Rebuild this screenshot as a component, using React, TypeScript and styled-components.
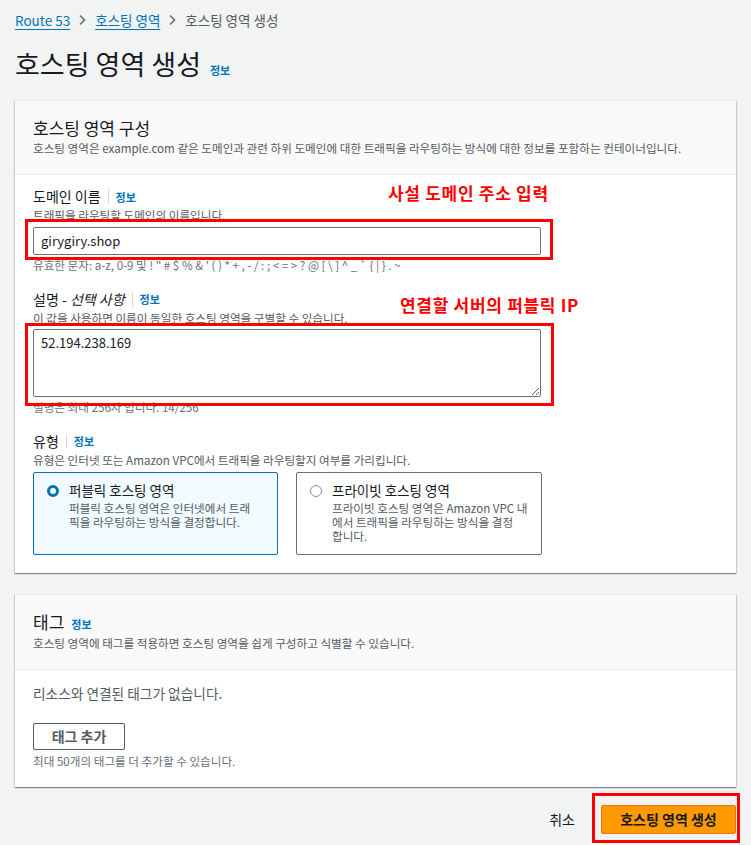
import React from "react";
import styled, { createGlobalStyle } from "styled-components";

const GlobalStyle = createGlobalStyle`
  html, body {
    margin: 0;
    padding: 0;
    background: #f2f3f3;
  }
  body {
    font-family: "Noto Sans CJK KR", "Noto Sans", sans-serif;
    color: #16191f;
  }
  * {
    box-sizing: border-box;
  }
`;

const publicDesc = "퍼블릭 호스팅 영역은 인터넷에서 트래\n픽을 라우팅하는 방식을 결정합니다.";
const privateDesc = "프라이빗 호스팅 영역은 Amazon VPC 내\n에서 트래픽을 라우팅하는 방식을 결정\n합니다.";

function Chevron() {
  return (
    <ChevronIcon width="8" height="12" viewBox="0 0 8 12">
      <path d="M2 1.5l4.5 4.5L2 10.5" fill="none" stroke="#687078" strokeWidth="1.7" />
    </ChevronIcon>
  );
}

function FieldLabel({ children }: { children: React.ReactNode }) {
  return (
    <LabelRow>
      <LabelText>{children}</LabelText>
      <Separator />
      <InfoLink>정보</InfoLink>
    </LabelRow>
  );
}

export default function App() {
  return (
    <Page>
      <GlobalStyle />
      <Breadcrumbs>
        <Crumb>Route 53</Crumb>
        <Chevron />
        <Crumb>호스팅 영역</Crumb>
        <Chevron />
        <CurrentCrumb>호스팅 영역 생성</CurrentCrumb>
      </Breadcrumbs>

      <PageTitle>
        <span>호스팅 영역 생성</span>
        <InfoLink>정보</InfoLink>
      </PageTitle>

      <Card>
        <CardHeader>
          <CardTitle>호스팅 영역 구성</CardTitle>
          <CardDesc>
            호스팅 영역은 example.com 같은 도메인과 관련 하위 도메인에 대한 트래픽을 라우팅하는 방식에 대한 정보를 포함하는
            컨테이너입니다.
          </CardDesc>
        </CardHeader>
        <CardBody>
          <Field>
            <Annotation $top={-5} $left={355}>사설 도메인 주소 입력</Annotation>
            <FieldLabel>도메인 이름</FieldLabel>
            <FieldDesc>트래픽을 라우팅할 도메인의 이름입니다.</FieldDesc>
            <ControlWrap $mt={4.4}>
              <TextInput defaultValue="girygiry.shop" readOnly />
              <RedFrame $t={-8} $r={-11} $b={-5} $l={-8} />
            </ControlWrap>
            <Hint>유효한 문자: a-z, 0-9 및 ! " # $ % &amp; ' ( ) * + , - / : ; &lt; = &gt; ? @ [ \ ] ^ _ ` {"{"} | {"}"} . ~</Hint>
          </Field>

          <Field>
            <Annotation $top={4} $left={367}>연결할 서버의 퍼블릭 IP</Annotation>
            <FieldLabel>
              설명 - <em>선택 사항</em>
            </FieldLabel>
            <FieldDesc>이 값을 사용하면 이름이 동일한 호스팅 영역을 구별할 수 있습니다.</FieldDesc>
            <ControlWrap $mt={3.4}>
              <TextArea defaultValue="52.194.238.169" readOnly />
              <RedFrame $t={-6} $r={-12} $b={-9} $l={-8} />
            </ControlWrap>
            <Hint>설명은 최대 256자 입니다. 14/256</Hint>
          </Field>

          <Field>
            <FieldLabel>유형</FieldLabel>
            <FieldDesc $mt={3}>유형은 인터넷 또는 Amazon VPC에서 트래픽을 라우팅할지 여부를 가리킵니다.</FieldDesc>
            <Tiles>
              <Tile $selected>
                <Radio $checked />
                <TileText>
                  <TileTitle>퍼블릭 호스팅 영역</TileTitle>
                  <TileDesc>{publicDesc}</TileDesc>
                </TileText>
              </Tile>
              <Tile>
                <Radio />
                <TileText>
                  <TileTitle>프라이빗 호스팅 영역</TileTitle>
                  <TileDesc>{privateDesc}</TileDesc>
                </TileText>
              </Tile>
            </Tiles>
          </Field>
        </CardBody>
      </Card>

      <Card $mt={21}>
        <CardHeader $pt={17}>
          <CardTitle>
            <span>태그</span>
            <InfoLink>정보</InfoLink>
          </CardTitle>
          <CardDesc $mt={3}>호스팅 영역에 태그를 적용하면 호스팅 영역을 쉽게 구성하고 식별할 수 있습니다.</CardDesc>
        </CardHeader>
        <TagBody>
          <EmptyText>리소스와 연결된 태그가 없습니다.</EmptyText>
          <SecondaryButton>태그 추가</SecondaryButton>
          <Hint $mt={4}>최대 50개의 태그를 더 추가할 수 있습니다.</Hint>
        </TagBody>
      </Card>

      <Footer>
        <CancelButton>취소</CancelButton>
        <PrimaryWrap>
          <PrimaryButton>호스팅 영역 생성</PrimaryButton>
          <RedFrame $t={-12} $r={-4} $b={-9} $l={-9} />
        </PrimaryWrap>
      </Footer>
    </Page>
  );
}

const Page = styled.div`
  padding: 0 15px 12px;
  width: 751px;
`;

const Breadcrumbs = styled.nav`
  display: flex;
  align-items: center;
  padding-top: 12px;
  height: 28px;
  font-size: 13.5px;
  line-height: 16px;
`;

const Crumb = styled.a`
  color: #0073bb;
  text-decoration: underline;
  text-underline-offset: 3px;
  cursor: pointer;
`;

const CurrentCrumb = styled.span`
  color: #545b64;
`;

const ChevronIcon = styled.svg`
  margin: 0 9px 0 8px;
  flex-shrink: 0;
`;

const PageTitle = styled.h1`
  display: flex;
  align-items: baseline;
  gap: 9px;
  margin: 20px 0 0;
  height: 32px;
  font-size: 27px;
  line-height: 32px;
  font-weight: 400;
  color: #16191f;
`;

const Card = styled.section<{ $mt?: number }>`
  margin-top: ${(p) => p.$mt ?? 20}px;
  background: #fff;
  border-top: 1px solid #eaeded;
  box-shadow: 0 1px 1px 0 rgba(0, 28, 36, 0.35), 1px 1px 1px 0 rgba(0, 28, 36, 0.12),
    -1px 1px 1px 0 rgba(0, 28, 36, 0.12);
`;

const CardHeader = styled.div<{ $pt?: number }>`
  background: #fafafa;
  border-bottom: 1px solid #eaeded;
  padding: ${(p) => p.$pt ?? 17}px 18px 18px;
`;

const CardTitle = styled.h2`
  display: flex;
  align-items: baseline;
  gap: 7px;
  margin: 0;
  height: 20px;
  font-size: 17px;
  line-height: 20px;
  font-weight: 400;
  color: #16191f;
`;

const CardDesc = styled.p<{ $mt?: number }>`
  margin: ${(p) => p.$mt ?? 2}px 0 0;
  font-size: 11.6px;
  line-height: 16px;
  color: #545b64;
`;

const CardBody = styled.div`
  padding: 13px 18px 18px;
  display: flex;
  flex-direction: column;
  gap: 18px;
`;

const Field = styled.div`
  position: relative;
  width: 509px;
`;

const LabelRow = styled.div`
  display: flex;
  align-items: center;
  height: 17px;
`;

const LabelText = styled.span`
  font-size: 14px;
  line-height: 17px;
  color: #16191f;
`;

const Separator = styled.span`
  width: 1px;
  height: 15px;
  background: #d5dbdb;
  margin: 0 7px;
`;

const InfoLink = styled.a`
  font-size: 11px;
  line-height: 16px;
  font-weight: 700;
  color: #0073bb;
  cursor: pointer;
`;

const FieldDesc = styled.div<{ $mt?: number }>`
  margin-top: ${(p) => p.$mt ?? 2.6}px;
  font-size: 11.6px;
  line-height: 15px;
  color: #545b64;
`;

const Hint = styled.div<{ $mt?: number }>`
  margin-top: ${(p) => p.$mt ?? 3}px;
  font-size: 11.6px;
  line-height: 15px;
  color: #687078;
`;

const ControlWrap = styled.div<{ $mt: number }>`
  position: relative;
  margin-top: ${(p) => p.$mt}px;
`;

const TextInput = styled.input`
  display: block;
  width: 508px;
  height: 28px;
  padding: 0 7px;
  border: 1px solid #687078;
  border-radius: 2px;
  font-family: inherit;
  font-size: 13px;
  color: #16191f;
  background: #fff;
  outline: none;
`;

const TextArea = styled.textarea`
  display: block;
  width: 508px;
  height: 68px;
  padding: 4px 7px;
  border: 1px solid #687078;
  border-radius: 2px;
  font-family: inherit;
  font-size: 13px;
  line-height: 18px;
  color: #16191f;
  background: #fff;
  resize: vertical;
  outline: none;
`;

const RedFrame = styled.div<{ $t: number; $r: number; $b: number; $l: number }>`
  position: absolute;
  top: ${(p) => p.$t}px;
  right: ${(p) => p.$r}px;
  bottom: ${(p) => p.$b}px;
  left: ${(p) => p.$l}px;
  border: 3px solid #ff0000;
  pointer-events: none;
`;

const Annotation = styled.div<{ $top: number; $left: number }>`
  position: absolute;
  top: ${(p) => p.$top}px;
  left: ${(p) => p.$left}px;
  font-size: 17px;
  line-height: 20px;
  font-weight: 700;
  letter-spacing: 0.7px;
  color: #ff0000;
  white-space: nowrap;
`;

const Tiles = styled.div`
  margin-top: 4px;
  display: grid;
  grid-template-columns: 245px 246px;
  column-gap: 18px;
`;

const Tile = styled.div<{ $selected?: boolean }>`
  display: flex;
  align-items: flex-start;
  gap: 10px;
  height: 83px;
  padding: 9px 2px 12px 13px;
  border: 1px solid ${(p) => (p.$selected ? "#0073bb" : "#687078")};
  border-radius: 2px;
  background: ${(p) => (p.$selected ? "#f1faff" : "#fff")};
`;

const Radio = styled.span<{ $checked?: boolean }>`
  flex-shrink: 0;
  width: 12px;
  height: 12px;
  margin-top: 3px;
  border-radius: 50%;
  background: #fff;
  border: ${(p) => (p.$checked ? "3.5px solid #0073bb" : "1.5px solid #879596")};
`;

const TileText = styled.div`
  display: flex;
  flex-direction: column;
  min-width: 0;
`;

const TileTitle = styled.div`
  font-size: 13.5px;
  line-height: 16px;
  color: #16191f;
`;

const TileDesc = styled.div`
  margin-top: 3px;
  font-size: 11.6px;
  line-height: 14px;
  color: #545b64;
  white-space: pre-line;
`;

const TagBody = styled.div`
  padding: 15px 18px 18px;
`;

const EmptyText = styled.div`
  font-size: 13.7px;
  line-height: 16px;
  color: #545b64;
`;

const SecondaryButton = styled.button`
  display: block;
  margin-top: 22px;
  width: 92px;
  height: 27px;
  padding: 0;
  border: 1px solid #545b64;
  border-radius: 2px;
  background: #fff;
  font-family: inherit;
  font-size: 14px;
  font-weight: 700;
  color: #545b64;
  cursor: pointer;
`;

const Footer = styled.div`
  display: flex;
  justify-content: flex-end;
  align-items: center;
  gap: 12px;
  margin-top: 18px;
`;

const CancelButton = styled.button`
  border: none;
  background: none;
  padding: 0 14px;
  height: 29px;
  font-family: inherit;
  font-size: 14px;
  color: #16191f;
  cursor: pointer;
`;

const PrimaryWrap = styled.div`
  position: relative;
`;

const PrimaryButton = styled.button`
  display: block;
  width: 135px;
  height: 29px;
  padding: 0;
  border: 1px solid #ec7211;
  border-radius: 2px;
  background: #ff9900;
  font-family: inherit;
  font-size: 14px;
  font-weight: 700;
  color: #16191f;
  cursor: pointer;
`;
